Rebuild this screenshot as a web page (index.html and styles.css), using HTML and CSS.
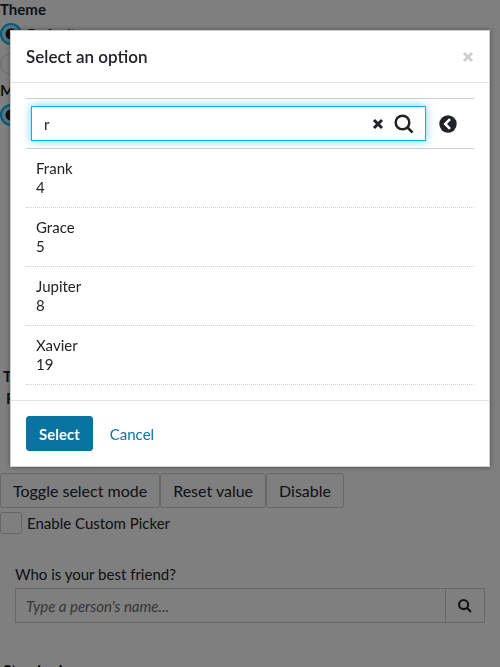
FILE: index.html
```html
<!DOCTYPE html>
<html lang="en">
<head>
<meta charset="utf-8">
<meta name="viewport" content="width=device-width, initial-scale=1">
<title>Lookup</title>
<link rel="stylesheet" href="styles.css">
</head>
<body>
<main class="page">
  <fieldset class="group">
    <legend class="heading">Theme</legend>
    <label class="choice"><input class="radio" type="radio" name="theme" checked>Default</label>
    <label class="choice"><input class="radio" type="radio" name="theme">Modern</label>
  </fieldset>
  <fieldset class="group group-mode">
    <legend class="heading">Mode</legend>
    <label class="choice"><input class="radio" type="radio" name="mode" checked>Light</label>
  </fieldset>
  <section class="values">
    <h2 class="heading">Test</h2>
    <p class="heading value">Person</p>
  </section>
  <div class="actions">
    <button class="btn" type="button">Toggle select mode</button>
    <button class="btn" type="button">Reset value</button>
    <button class="btn" type="button">Disable</button>
  </div>
  <label class="choice"><input class="check" type="checkbox">Enable Custom Picker</label>
  <div class="field">
    <label for="friend">Who is your best friend?</label>
    <div class="input-group">
      <input class="text" id="friend" type="text" placeholder="Type a person's name...">
      <button class="addon" type="button" aria-label="Search">
        <svg class="icon-sm" viewBox="0 0 20 20"><circle cx="8" cy="8" r="6.5"/><path d="M13 13l5.5 5.5"/></svg>
      </button>
    </div>
  </div>
  <h2 class="heading section-heading">Standard</h2>
</main>
<div class="backdrop">
  <div class="modal" role="dialog" aria-modal="true" aria-labelledby="title">
    <header class="modal-header">
      <h1 class="title" id="title">Select an option</h1>
      <button class="icon-btn close" type="button" aria-label="Close">
        <svg class="icon-x" viewBox="0 0 12 12"><path d="M2 2l8 8M10 2l-8 8"/></svg>
      </button>
    </header>
    <div class="modal-body">
      <div class="toolbar">
        <div class="search">
          <input class="search-input" type="text" value="r" aria-label="Search items">
          <button class="icon-btn" type="button" aria-label="Clear">
            <svg class="icon-x" viewBox="0 0 12 12"><path d="M2 2l8 8M10 2l-8 8"/></svg>
          </button>
          <button class="icon-btn" type="button" aria-label="Search">
            <svg class="icon-search" viewBox="0 0 20 20"><circle cx="8.5" cy="8.5" r="6.8"/><path d="M13.5 13.5l5 5"/></svg>
          </button>
        </div>
        <button class="icon-btn" type="button" aria-label="Collapse search">
          <svg class="icon-back" viewBox="0 0 18 18"><circle cx="9" cy="9" r="8.7"/><path d="M11 4.2L6.2 9l4.8 4.8"/></svg>
        </button>
      </div>
      <ul class="list">
        <li class="item"><div>Frank</div><div>4</div></li>
        <li class="item"><div>Grace</div><div>5</div></li>
        <li class="item"><div>Jupiter</div><div>8</div></li>
        <li class="item"><div>Xavier</div><div>19</div></li>
      </ul>
    </div>
    <footer class="modal-footer">
      <button class="btn primary" type="button">Select</button>
      <button class="btn link" type="button">Cancel</button>
    </footer>
  </div>
</div>
</body>
</html>
```
FILE: styles.css
```css
* { box-sizing: border-box; }

body {
  margin: 0;
  height: 100vh;
  overflow: hidden;
  background: #fff;
  color: #212327;
  font: 15px/20px Lato, "Open Sans", sans-serif;
}

button, input { font: inherit; color: inherit; }

svg { display: block; fill: none; stroke: currentColor; }

/* Page behind the dialog */
.group { margin: 0; padding: 0; border: 0; }
.group-mode { margin-top: 2px; margin-bottom: 237px; }
.heading { margin: 0; padding: 0; font-size: 15px; line-height: 19px; font-weight: 700; }
.choice { display: flex; align-items: center; gap: 5px; height: 30px; }

.radio, .check {
  appearance: none;
  flex: none;
  width: 22px;
  height: 22px;
  margin: 0;
  border: 1px solid #cdcfd2;
  background: #fff;
}
.radio { border-radius: 50%; }
.radio:checked {
  border: 2px solid #00b4f1;
  background: radial-gradient(circle, #212327 5px, #b2e8fb 6px);
}
.check { border-radius: 3px; }

.values { padding-left: 3px; margin-bottom: 62px; }
.value { padding: 3px; }

.actions { display: flex; font-size: 16px; }
.btn {
  height: 35px;
  padding: 0 12px;
  border: 1px solid #cdcfd2;
  border-radius: 3px;
  background: #fff;
}

.field { padding: 26px 15px 38px; }
.field label { display: block; }
.input-group { display: flex; height: 35px; margin-top: 4px; border: 1px solid #cdcfd2; }
.text { flex: 1; min-width: 0; padding: 0 10px; border: 0; background: #fff; }
.text::placeholder { color: #686c73; font-style: italic; opacity: 1; }
.addon {
  display: grid;
  place-items: center;
  width: 39px;
  padding: 0;
  border: 0;
  border-left: 1px solid #cdcfd2;
  background: #fff;
}
.icon-sm { width: 14px; height: 14px; stroke-width: 3; }
.section-heading { padding-left: 3px; }

/* Dialog */
.backdrop { position: fixed; inset: 0; padding: 30px 10px; background: rgba(0, 0, 0, .5); }
.modal { border: 1px solid #cdcfd2; background: #fff; box-shadow: 0 0 5px rgba(0, 0, 0, .4); }
.modal-header {
  display: flex;
  align-items: center;
  justify-content: space-between;
  height: 52px;
  padding: 0 15px;
  border-bottom: 1px solid #e2e3e4;
}
.title { margin: 0; font-size: 17px; line-height: 20px; font-weight: 600; }
.icon-btn { padding: 0; border: 0; background: none; }
.close { color: #cdcfd2; }
.icon-x { width: 12px; height: 12px; stroke-width: 3; }
.icon-search { width: 20px; height: 20px; stroke-width: 2.5; }
.icon-back { width: 18px; height: 18px; }
.icon-back circle { fill: currentColor; stroke: none; }
.icon-back path { stroke: #fff; stroke-width: 2.5; }

.modal-body { padding: 15px; }
.toolbar {
  display: flex;
  align-items: center;
  gap: 13px;
  padding: 7px 17px 7px 5px;
  border-top: 1px solid #cdcfd2;
  border-bottom: 1px solid #cdcfd2;
}
.search {
  display: flex;
  flex: 1;
  align-items: center;
  gap: 10px;
  height: 35px;
  padding: 0 11px 0 12px;
  border: 1px solid #00b4f1;
  box-shadow: 0 0 8px rgba(0, 180, 241, .6);
}
.search-input { flex: 1; min-width: 0; padding: 0; border: 0; outline: 0; background: none; }
.list { margin: 0; padding: 0; list-style: none; }
.item { padding: 10px; border-bottom: 1px dotted #cdcfd2; line-height: 19px; }

.modal-footer { display: flex; gap: 4px; padding: 15px; border-top: 1px solid #e2e3e4; }
.primary { border-color: #0974a1; background: #0974a1; color: #fff; font-weight: 700; }
.link { border-color: transparent; background: none; color: #0974a1; }
```
